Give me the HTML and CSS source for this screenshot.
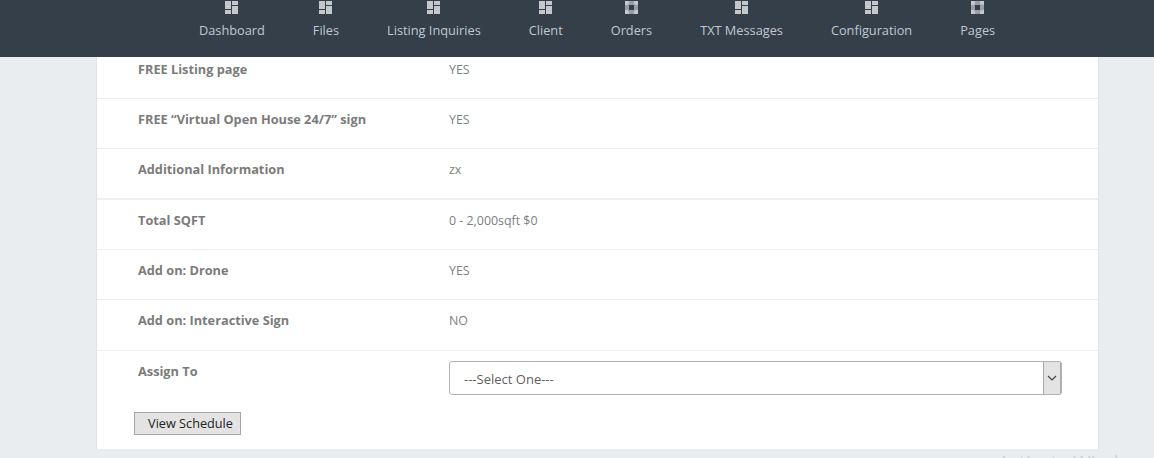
FILE: index.html
```html
<!DOCTYPE html>
<html lang="en">
<head>
  <meta charset="UTF-8">
  <title>Order Details</title>
  <link rel="stylesheet" href="styles.css">
</head>
<body>
  <svg class="icon-defs" width="0" height="0">
    <symbol id="icon-grid" viewBox="0 0 13 13">
      <rect x="0" y="0" width="6" height="8"/>
      <rect x="0" y="9" width="6" height="4"/>
      <rect x="7" y="0" width="6" height="4"/>
      <rect x="7" y="5" width="6" height="8"/>
    </symbol>
    <symbol id="icon-box" viewBox="0 0 13 13">
      <path fill-rule="evenodd" opacity="0.7" d="M0 0h13v13H0z M4 4v5h5V4z"/>
      <path d="M0 0h4v3H3v1H0z M9 0h4v4h-3V3H9z M0 9h3v1h1v3H0z M10 9h3v4H9v-3h1z"/>
    </symbol>
  </svg>

  <nav class="topnav">
    <a class="nav-item" href="#"><svg class="nav-icon"><use href="#icon-grid"/></svg>Dashboard</a>
    <a class="nav-item" href="#"><svg class="nav-icon"><use href="#icon-grid"/></svg>Files</a>
    <a class="nav-item" href="#"><svg class="nav-icon"><use href="#icon-grid"/></svg>Listing Inquiries</a>
    <a class="nav-item" href="#"><svg class="nav-icon"><use href="#icon-grid"/></svg>Client</a>
    <a class="nav-item" href="#"><svg class="nav-icon"><use href="#icon-box"/></svg>Orders</a>
    <a class="nav-item" href="#"><svg class="nav-icon"><use href="#icon-grid"/></svg>TXT Messages</a>
    <a class="nav-item" href="#"><svg class="nav-icon"><use href="#icon-grid"/></svg>Configuration</a>
    <a class="nav-item" href="#"><svg class="nav-icon"><use href="#icon-box"/></svg>Pages</a>
  </nav>

  <main class="card">
    <div class="row row-first">
      <div class="label">FREE Listing page</div>
      <div class="value">YES</div>
    </div>
    <div class="row">
      <div class="label">FREE “Virtual Open House 24/7” sign</div>
      <div class="value">YES</div>
    </div>
    <div class="row row-thick">
      <div class="label">Additional Information</div>
      <div class="value">zx</div>
    </div>
    <div class="row">
      <div class="label">Total SQFT</div>
      <div class="value">0 - 2,000sqft $0</div>
    </div>
    <div class="row">
      <div class="label">Add on: Drone</div>
      <div class="value">YES</div>
    </div>
    <div class="row row-tall">
      <div class="label">Add on: Interactive Sign</div>
      <div class="value">NO</div>
    </div>
    <div class="row row-assign">
      <div class="label">Assign To</div>
      <div class="select-box">
        <span class="select-text">---Select One---</span>
        <span class="select-arrow">
          <svg width="10" height="6" viewBox="0 0 10 6"><path d="M1 1l4 4 4-4" fill="none" stroke="#444" stroke-width="1.2"/></svg>
        </span>
      </div>
    </div>
    <button class="schedule-btn" type="button">View Schedule</button>
  </main>

  <div class="watermark">Activate Windows</div>
</body>
</html>
```

FILE: styles.css
```css
html, body {
  margin: 0;
  height: 458px;
  overflow: hidden;
}
body {
  background-color: #eaedf0;
  font-family: "Open Sans", sans-serif;
  font-size: 12.75px;
  color: #7a7a7a;
}
.icon-defs {
  display: block;
}
.topnav {
  display: flex;
  gap: 48px;
  height: 57px;
  padding-left: 199px;
  background-color: #353f4a;
}
.nav-item {
  display: flex;
  flex-direction: column;
  align-items: center;
  color: #bfc8d0;
  text-decoration: none;
  line-height: 18px;
}
.nav-icon {
  width: 13px;
  height: 13px;
  margin-top: 1px;
  margin-bottom: 7px;
  fill: #c4c8cb;
}
.card {
  box-sizing: border-box;
  width: 1003px;
  height: 392px;
  margin-left: 96px;
  background-color: #fff;
  border-left: 1px solid #dee2e6;
  border-right: 1px solid #dee2e6;
}
.row {
  display: flex;
  box-sizing: border-box;
  height: 50px;
  padding: 11px 0 0 41px;
  border-bottom: 1px solid #edf0f3;
  line-height: 18px;
}
.row-first {
  height: 42px;
  padding-top: 3px;
}
.row-thick {
  border-bottom-width: 2px;
  height: 51px;
}
.row-tall {
  height: 51px;
}
.row-assign {
  height: 61px;
  border-bottom: none;
}
.label {
  width: 311px;
  font-weight: 700;
  color: #7b7b7b;
}
.value {
  font-size: 12.4px;
  line-height: 20px;
  color: #7b7f84;
}
.select-box {
  display: flex;
  box-sizing: border-box;
  justify-content: space-between;
  width: 613px;
  height: 34px;
  margin-top: -1px;
  padding-left: 14px;
  background-color: #fff;
  border: 1px solid #b3b3b3;
  border-radius: 3px;
  font-size: 13px;
  color: #5f5f5f;
  line-height: 34px;
}
.select-arrow {
  display: flex;
  align-items: center;
  justify-content: center;
  width: 16px;
  background-color: #e3e3e3;
  border-left: 1px solid #aaa;
  border-right: 1px solid #aaa;
}
.schedule-btn {
  display: block;
  box-sizing: border-box;
  width: 107px;
  height: 23px;
  margin-left: 37px;
  padding: 0 0 2px 6px;
  background-color: #e3e3e3;
  border: 1px solid #a6a6a6;
  font-family: "Open Sans", sans-serif;
  font-size: 12.7px;
  color: #222;
}
.watermark {
  position: absolute;
  left: 998px;
  top: 450px;
  font-size: 19px;
  line-height: 24px;
  color: #cfd3d7;
  white-space: nowrap;
}
```
